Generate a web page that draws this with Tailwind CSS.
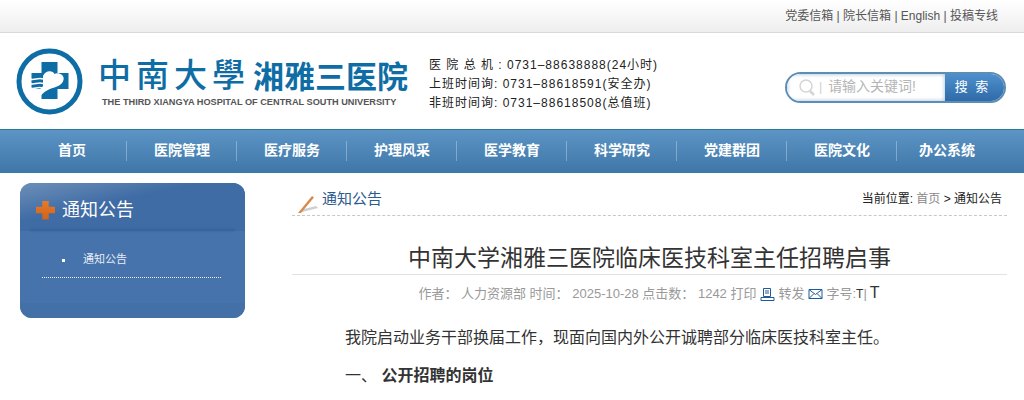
<!DOCTYPE html>
<html lang="zh-CN">
<head>
    <meta charset="UTF-8">
    <title>中南大学湘雅三医院</title>
    <script src="https://cdn.jsdelivr.net/npm/@tailwindcss/browser@4"></script>
</head>
<body class="bg-white h-[400px] overflow-hidden font-['Liberation_Sans','Noto_Sans_CJK_SC',sans-serif] text-[#333]">
    <!-- top links -->
    <div class="h-[33px] bg-gradient-to-b from-white to-[#eeeeee] border-b border-[#d9d9d9] flex justify-end items-center pr-[26px] pb-[1px] text-xs text-[#555]">
        <span>党委信箱 | 院长信箱 | English | 投稿专线</span>
    </div>

    <!-- header -->
    <div class="h-[96px] flex items-center">
        <div class="w-[429px] pl-[16px] flex items-center shrink-0">
            <svg class="w-[67px] h-[67px] shrink-0" viewBox="0 0 67 67">
                <circle cx="33.5" cy="33.500" r="30.500" fill="none" stroke="#0f6da6" stroke-width="5"/>
                <path d="M25.500 14h16v11h11v16h-11v10h-16V41h-10V25h10z" fill="#0f6da6"/>
                <path d="M27 28C29 22 37 22 38.500 26C42 24 49 27 47.500 32C46 39 37 39 31 42.500C28 44 26 46 24 48.500L21 45L27 38z" fill="#fff"/>
                <path d="M14 31c4 2 8-2 13 0M14 35.500c4 2 8-2 13 0M14 40c4 2 8-2 12 0" fill="none" stroke="#fff" stroke-width="1.500"/>
            </svg>
            <div class="ml-[15px] mt-[-2px] flex flex-col">
                <div class="flex items-end text-[#0f6da6] leading-none h-[38px]">
                    <span class="font-['Noto_Sans_CJK_SC'] text-[33px] tracking-[5px] font-medium w-[155px] whitespace-nowrap">中南大學</span>
                    <span class="font-['Noto_Sans_CJK_SC'] text-[31px] font-bold whitespace-nowrap">湘雅三医院</span>
                </div>
                <div class="mt-[6px] ml-[4px] text-[9.2px] leading-[12px] font-bold text-[#555] whitespace-nowrap">THE THIRD XIANGYA HOSPITAL OF CENTRAL SOUTH UNIVERSITY</div>
            </div>
        </div>
        <div class="text-xs leading-[19px] text-[#222] tracking-[1px] whitespace-nowrap pt-[7px]">
            <p>医 院 总 机 : 0731–88638888(24小时)</p>
            <p>上班时间询: 0731–88618591(安全办)</p>
            <p>非班时间询: 0731–88618508(总值班)</p>
        </div>
        <!-- search -->
        <div class="ml-auto mr-[18px] mt-[12px] flex h-[31px] w-[221px] rounded-full border-2 border-[#5c8db5] overflow-hidden">
            <div class="w-[158px] bg-white shadow-[inset_0_0_4px_#9bb8d0] flex items-center pl-[11px] text-sm text-[#b5b5b5]">
                <svg class="w-[18px] h-[18px] shrink-0" viewBox="0 0 18 18" fill="none" stroke="#d5d5d5">
                    <circle cx="8" cy="8" r="6" stroke-width="1.500"/>
                    <path d="M12 13l4 4" stroke-width="2.500"/>
                </svg>
                <span class="ml-[3px] mr-[6px] text-xs text-[#ccc]">|</span>
                <span class="whitespace-nowrap mt-[-3px]">请输入关键词!</span>
            </div>
            <div class="flex-1 bg-gradient-to-b from-[#4d90cd] to-[#2f6ba8] text-white text-[13px] flex items-center justify-center pr-[4px] tracking-[2px]">搜 索</div>
        </div>
    </div>

    <!-- nav -->
    <div class="h-[44px] bg-gradient-to-b from-[#5b94c5] to-[#3f78a8] border-t border-[#2c7a96] border-b border-b-[#3d7c9e] flex pl-[17px] text-white text-sm font-bold">
        <a class="w-[110px] flex items-center justify-center relative after:absolute after:right-0 after:top-[11px] after:h-5 after:w-px after:bg-white/30 pb-[3px]">首页</a>
        <a class="w-[110px] flex items-center justify-center relative after:absolute after:right-0 after:top-[11px] after:h-5 after:w-px after:bg-white/30 pb-[3px]">医院管理</a>
        <a class="w-[110px] flex items-center justify-center relative after:absolute after:right-0 after:top-[11px] after:h-5 after:w-px after:bg-white/30 pb-[3px]">医疗服务</a>
        <a class="w-[110px] flex items-center justify-center relative after:absolute after:right-0 after:top-[11px] after:h-5 after:w-px after:bg-white/30 pb-[3px]">护理风采</a>
        <a class="w-[110px] flex items-center justify-center relative after:absolute after:right-0 after:top-[11px] after:h-5 after:w-px after:bg-white/30 pb-[3px]">医学教育</a>
        <a class="w-[110px] flex items-center justify-center relative after:absolute after:right-0 after:top-[11px] after:h-5 after:w-px after:bg-white/30 pb-[3px]">科学研究</a>
        <a class="w-[110px] flex items-center justify-center relative after:absolute after:right-0 after:top-[11px] after:h-5 after:w-px after:bg-white/30 pb-[3px]">党建群团</a>
        <a class="w-[110px] flex items-center justify-center relative after:absolute after:right-0 after:top-[11px] after:h-5 after:w-px after:bg-white/30 pb-[3px]">医院文化</a>
        <a class="w-[100px] flex items-center justify-center pb-[3px]">办公系统</a>
    </div>

    <div class="flex pt-[10px]">
        <!-- sidebar -->
        <div class="ml-[20px] w-[225px] h-[135px] shrink-0 rounded-[12px] overflow-hidden bg-[#4673ac] text-white">
            <div class="h-[48px] flex items-center pl-[16px] pt-[6px] bg-gradient-to-br from-[#6d8fb8] via-[#3f6ca5] via-40% to-[#3f6ca5] relative">
                <span class="w-[19px] h-[19px] shrink-0 bg-[linear-gradient(#e87a28,#d0621a)] [clip-path:polygon(33%_0,67%_0,67%_33%,100%_33%,100%_67%,67%_67%,67%_100%,33%_100%,33%_67%,0_67%,0_33%,33%_33%)]"></span>
                <span class="ml-[7px] text-lg leading-none">通知公告</span>
                <div class="absolute left-[10px] right-[10px] bottom-0 h-[2px] bg-[#34598c]/70 blur-[1px]"></div>
            </div>
            <div class="h-[47px] mx-[22px] w-[179px] border-b border-dotted border-white/90 flex items-center text-[11px] text-[#e8eef6] pt-[10px]">
                <span class="w-[3px] h-[3px] bg-white ml-[20px] mr-[18px] mt-[2px]"></span>
                <span>通知公告</span>
            </div>
            <div class="h-[25px] bg-[#4673ac]"></div>
            <div class="h-[15px] bg-[#4470a8]"></div>
        </div>

        <!-- main -->
        <div class="ml-[47px] w-[715px]">
            <div class="h-[33px] border-b border-dashed border-[#c8c8c8] flex items-center justify-between pr-[5px]">
                <div class="flex items-center">
                    <svg class="ml-[4px] w-[24px] h-[24px] shrink-0 mt-[3px] overflow-visible" viewBox="0 0 24 24">
                        <path d="M2 24L22 19L20 17L8 20z" fill="#cfcfcf"/>
                        <path d="M2 24L16 7L18 8.500L5 24z" fill="#d98a4a"/>
                    </svg>
                    <span class="ml-[2px] mt-[1px] text-[15px] text-[#2c5a8c]">通知公告</span>
                </div>
                <div class="text-xs text-[#222]">当前位置: <span class="text-[#888]">首页</span> &gt; 通知公告</div>
            </div>

            <h1 class="mt-[24px] h-[35px] border-b border-[#e2e2e2] text-center text-[23px] leading-[36px] text-[#333]">中南大学湘雅三医院临床医技科室主任招聘启事</h1>

            <div class="h-[38px] flex items-center justify-center text-[13px] text-[#999] whitespace-nowrap pr-[1px]">
                <span>作者： 人力资源部 时间： 2025-10-28 点击数： 1242 打印</span>
                <svg class="w-[15px] h-[15px] ml-[4px] mr-[3px]" viewBox="0 0 15 15" fill="none" stroke="#1f5a9a">
                    <path d="M3.500 1.500h7v8h-7zM5 4h4M5 6h4M1 10.500h13v3H1z"/>
                </svg>
                <span>转发</span>
                <svg class="w-[15px] h-[12px] ml-[4px] mr-[3px]" viewBox="0 0 15 12" fill="none" stroke="#1f5a9a">
                    <path d="M1 1.500h13v9H1zM1 1.500l6.500 5 6.500-5M1 10.500l5-5M14 10.500l-5-5"/>
                </svg>
                <span>字号:</span><span class="text-xs text-[#333]">T</span><span>|</span><span class="ml-[3px] text-base text-[#333] mt-[-2px]">T</span>
            </div>

            <div class="px-[53px] text-base text-[#333] whitespace-nowrap">
                <p class="mt-[13px] leading-[24px]">我院启动业务干部换届工作，现面向国内外公开诚聘部分临床医技科室主任。</p>
                <p class="mt-[14px] leading-[24px]">一、 <b>公开招聘的岗位</b></p>
            </div>
        </div>
    </div>
</body>
</html>
